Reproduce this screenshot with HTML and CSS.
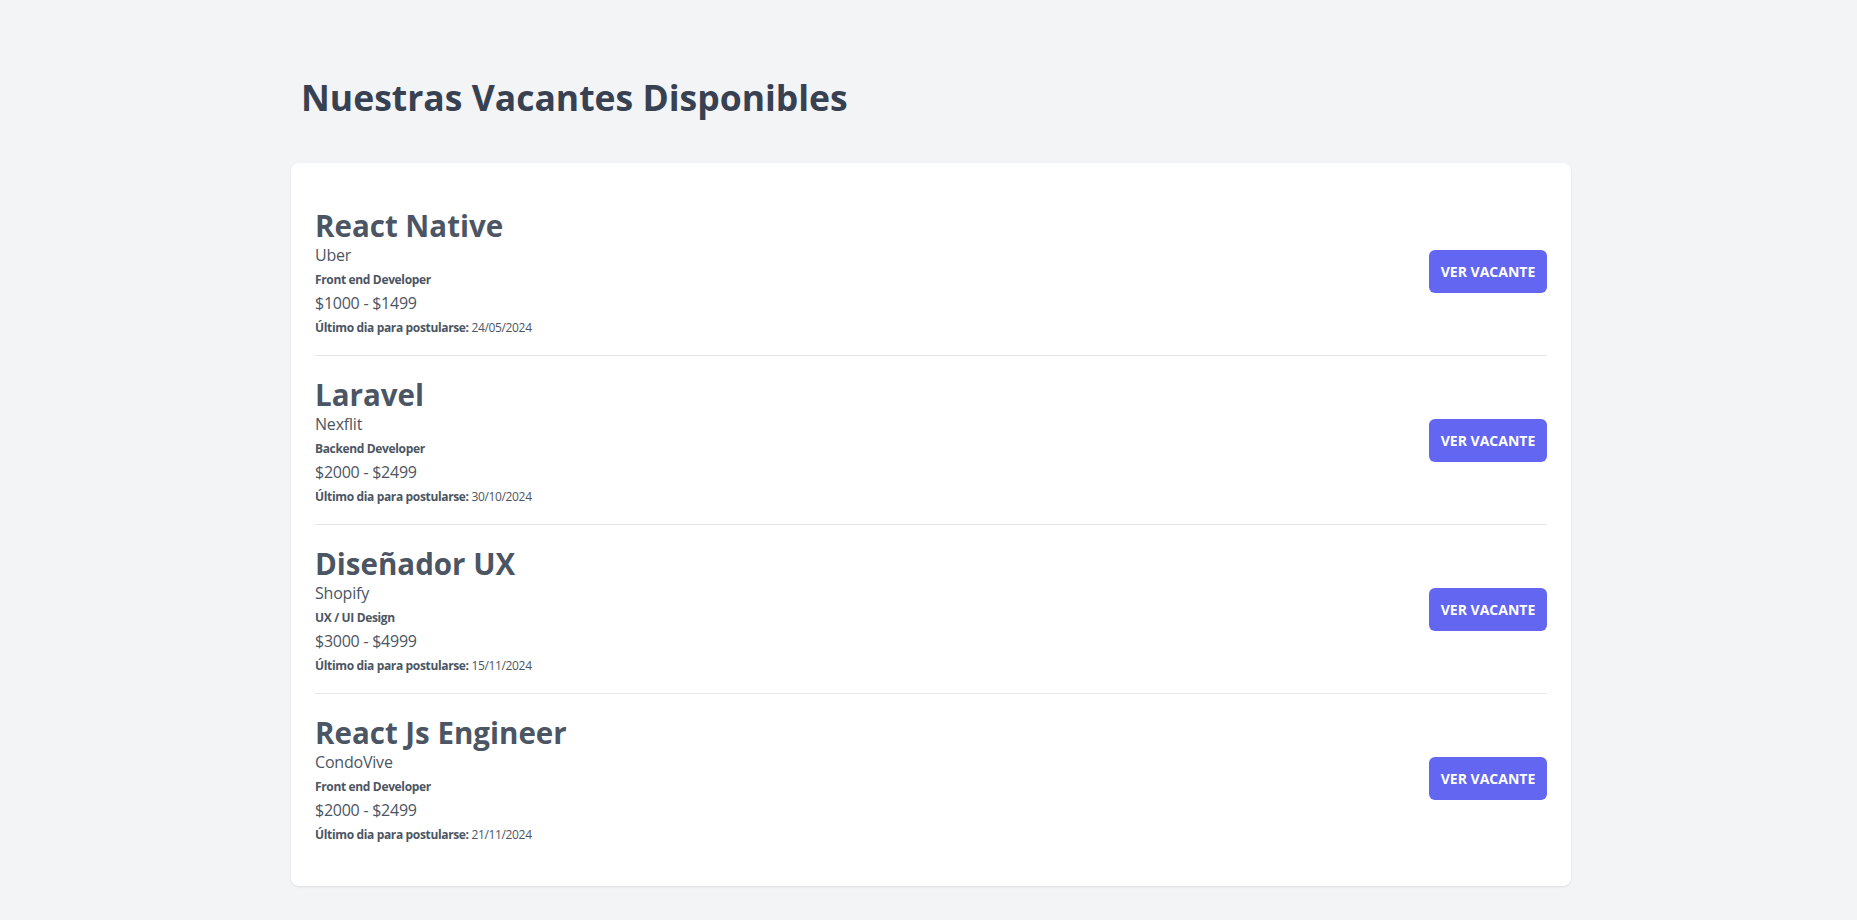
FILE: index.html
```html
<!DOCTYPE html>
<html lang="es">
<head>
<meta charset="utf-8">
<title>Nuestras Vacantes Disponibles</title>
<link rel="stylesheet" href="styles.css">
</head>
<body>
<div class="wrap">
  <h1 class="page-title">Nuestras Vacantes Disponibles</h1>
  <div class="card">
    <div class="job">
      <div class="job-info">
        <h3 class="job-title">React Native</h3>
        <p class="company">Uber</p>
        <p class="role">Front end Developer</p>
        <p class="salary">$1000 - $1499</p>
        <p class="deadline"><span class="label">Último dia para postularse:</span> 24/05/2024</p>
      </div>
      <a class="btn" href="#">Ver vacante</a>
    </div>
    <div class="job">
      <div class="job-info">
        <h3 class="job-title">Laravel</h3>
        <p class="company">Nexflit</p>
        <p class="role">Backend Developer</p>
        <p class="salary">$2000 - $2499</p>
        <p class="deadline"><span class="label">Último dia para postularse:</span> 30/10/2024</p>
      </div>
      <a class="btn" href="#">Ver vacante</a>
    </div>
    <div class="job">
      <div class="job-info">
        <h3 class="job-title">Diseñador UX</h3>
        <p class="company">Shopify</p>
        <p class="role">UX / UI Design</p>
        <p class="salary">$3000 - $4999</p>
        <p class="deadline"><span class="label">Último dia para postularse:</span> 15/11/2024</p>
      </div>
      <a class="btn" href="#">Ver vacante</a>
    </div>
    <div class="job">
      <div class="job-info">
        <h3 class="job-title">React Js Engineer</h3>
        <p class="company">CondoVive</p>
        <p class="role">Front end Developer</p>
        <p class="salary">$2000 - $2499</p>
        <p class="deadline"><span class="label">Último dia para postularse:</span> 21/11/2024</p>
      </div>
      <a class="btn" href="#">Ver vacante</a>
    </div>
  </div>
</div>
</body>
</html>
```
FILE: styles.css
```css
* { box-sizing: border-box; }
html, body {
  margin: 0;
  padding: 0;
  background: #f3f4f6;
  font-family: "Open Sans", "Noto Sans", "Liberation Sans", sans-serif;
  color: #4b5563;
}
.wrap {
  max-width: 1285px;
  margin: 0 auto;
  padding: 77px 0 36px 5px;
}
.page-title {
  margin: 0 0 46px 10px;
  font-size: 35.5px;
  line-height: 40px;
  font-weight: 700;
  color: #374151;
}
.card {
  background: #ffffff;
  border-radius: 8px;
  box-shadow: 0 1px 3px rgba(0,0,0,0.06), 0 1px 2px rgba(0,0,0,0.04);
  padding: 24px;
}
.job {
  display: flex;
  align-items: center;
  justify-content: space-between;
  padding: 20px 0;
}
.job + .job { border-top: 1px solid #e5e7eb; }
.job-info p { margin: 0; }
.job-title {
  margin: 0;
  font-size: 29.5px;
  line-height: 36px;
  font-weight: 700;
  color: #4b5563;
  position: relative;
  top: 1px;
}
.company {
  font-size: 16px;
  line-height: 24px;
  font-weight: 400;
  letter-spacing: -0.2px;
  color: #4b5563;
}
.role {
  font-size: 12px;
  line-height: 24px;
  font-weight: 700;
  letter-spacing: -0.35px;
  color: #4b5563;
  padding-top: 1px;
}
.salary {
  font-size: 16px;
  line-height: 23px;
  letter-spacing: -0.25px;
  color: #4b5563;
}
.deadline {
  margin-top: 6px !important;
  font-size: 12px;
  line-height: 14px;
  letter-spacing: -0.35px;
  color: #4b5563;
}
.deadline .label { font-weight: 700; }
.btn {
  display: inline-flex;
  align-items: center;
  justify-content: center;
  width: 118px;
  height: 43px;
  border-radius: 6px;
  background: #6366f1;
  color: #ffffff;
  font-size: 14px;
  font-weight: 700;
  text-transform: uppercase;
  text-decoration: none;
}
```
